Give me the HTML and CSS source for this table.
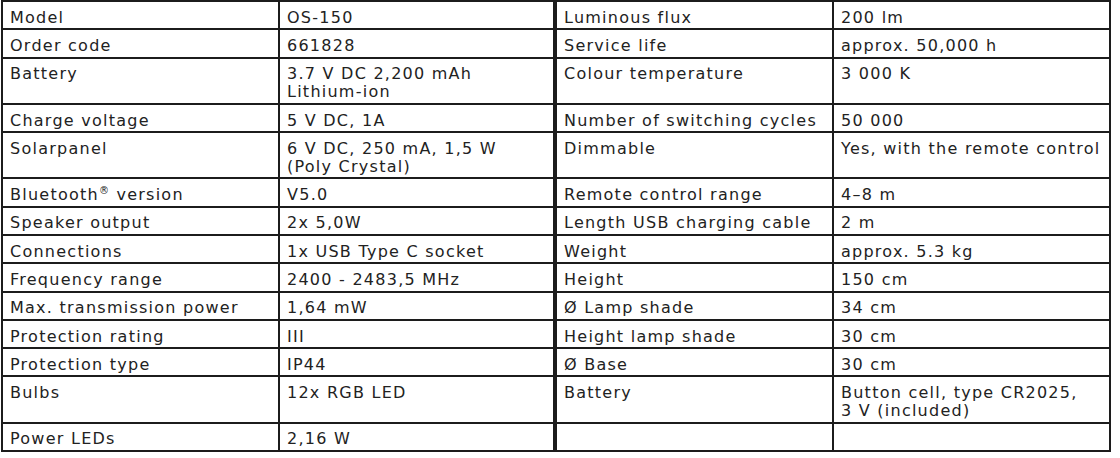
FILE: index.html
```html
<!DOCTYPE html>
<html>
<head>
<meta charset="utf-8">
<link rel="stylesheet" href="styles.css">
</head>
<body>
<table class="spec">
<colgroup>
<col class="c1"><col class="c2"><col class="c3"><col class="c4">
</colgroup>
<tbody>
<tr><td>Model</td><td class="mid">OS-150</td><td>Luminous flux</td><td>200 lm</td></tr>
<tr><td>Order code</td><td class="mid">661828</td><td>Service life</td><td>approx. 50,000 h</td></tr>
<tr><td>Battery</td><td class="mid">3.7 V DC 2,200 mAh<br>Lithium-ion</td><td>Colour temperature</td><td>3 000 K</td></tr>
<tr><td>Charge voltage</td><td class="mid">5 V DC, 1A</td><td>Number of switching cycles</td><td>50 000</td></tr>
<tr><td>Solarpanel</td><td class="mid">6 V DC, 250 mA, 1,5 W<br>(Poly Crystal)</td><td>Dimmable</td><td>Yes, with the remote control</td></tr>
<tr><td>Bluetooth<sup class="reg">®</sup> version</td><td class="mid">V5.0</td><td>Remote control range</td><td>4–8 m</td></tr>
<tr><td>Speaker output</td><td class="mid">2x 5,0W</td><td>Length USB charging cable</td><td>2 m</td></tr>
<tr><td>Connections</td><td class="mid">1x USB Type C socket</td><td>Weight</td><td>approx. 5.3 kg</td></tr>
<tr><td>Frequency range</td><td class="mid">2400 - 2483,5 MHz</td><td>Height</td><td>150 cm</td></tr>
<tr><td>Max. transmission power</td><td class="mid">1,64 mW</td><td>Ø Lamp shade</td><td>34 cm</td></tr>
<tr><td>Protection rating</td><td class="mid">III</td><td>Height lamp shade</td><td>30 cm</td></tr>
<tr><td>Protection type</td><td class="mid">IP44</td><td>Ø Base</td><td>30 cm</td></tr>
<tr><td>Bulbs</td><td class="mid">12x RGB LED</td><td>Battery</td><td>Button cell, type CR2025,<br>3 V (included)</td></tr>
<tr><td>Power LEDs</td><td class="mid">2,16 W</td><td></td><td></td></tr>
</tbody>
</table>
</body>
</html>
```
FILE: styles.css
```css
html, body {
  margin: 0;
  padding: 0;
  background: #ffffff;
}
body {
  padding-left: 1px;
}
.spec {
  border-collapse: collapse;
  table-layout: fixed;
  width: 1110px;
  font-family: "DejaVu Sans", Verdana, sans-serif;
  font-size: 16px;
  line-height: 18px;
  letter-spacing: 1.25px;
  color: #222222;
}
.c1 { width: 277px; }
.c2 { width: 276px; }
.c3 { width: 278px; }
.c4 { width: 277px; }
.spec td {
  border: 2px solid #1c1c1c;
  padding: 6.7px 2px 1.6px 7px;
  vertical-align: top;
  white-space: nowrap;
  overflow: hidden;
}
.spec td.mid {
  border-right: 4px solid #1c1c1c;
}
.reg {
  font-size: 10px;
  line-height: 0;
  letter-spacing: 0;
  vertical-align: 6px;
  margin-right: 1.2px;
}
```
